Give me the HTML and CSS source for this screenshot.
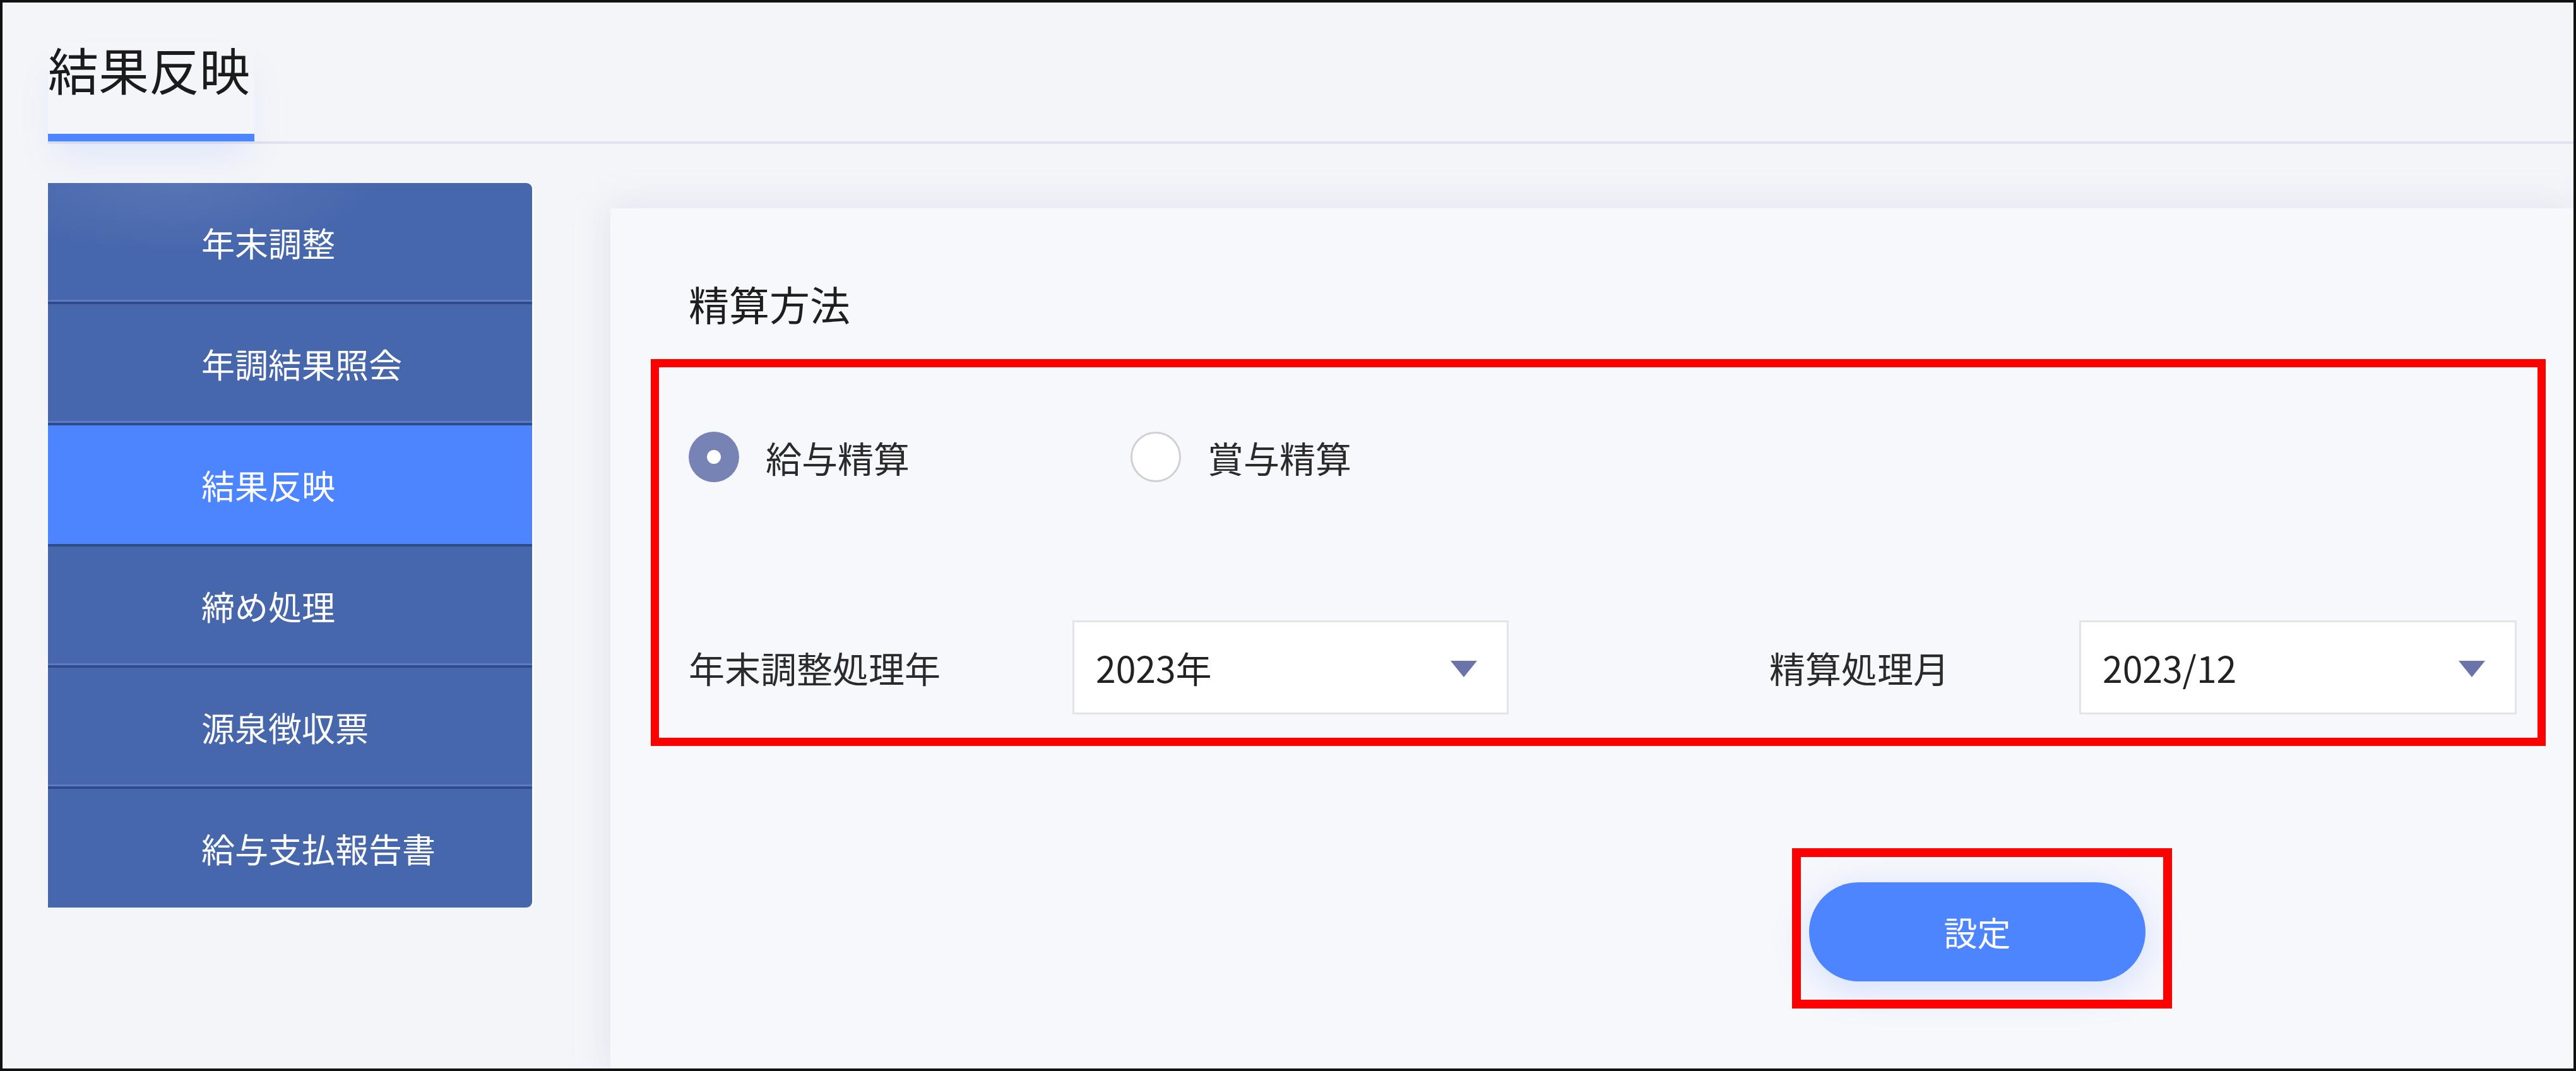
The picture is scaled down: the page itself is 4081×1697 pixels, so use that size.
FILE: index.html
```html
<!DOCTYPE html>
<html lang="ja">
<head>
<meta charset="utf-8">
<title>結果反映</title>
<link rel="stylesheet" href="styles.css">
</head>
<body>
<div class="frame">
  <header class="page-header">
    <div class="tab"><h1 class="tab-title">結果反映</h1></div>
  </header>
  <div class="content">
    <nav class="sidebar">
      <div class="nav-item nav-first">年末調整</div>
      <div class="nav-item">年調結果照会</div>
      <div class="nav-item nav-active">結果反映</div>
      <div class="nav-item">締め処理</div>
      <div class="nav-item">源泉徴収票</div>
      <div class="nav-item nav-last">給与支払報告書</div>
    </nav>
    <main class="panel">
      <h2 class="section-title">精算方法</h2>
      <div class="radio-row">
        <label class="radio-option">
          <span class="radio radio-checked"></span>
          <span class="radio-label">給与精算</span>
        </label>
        <label class="radio-option">
          <span class="radio"></span>
          <span class="radio-label">賞与精算</span>
        </label>
      </div>
      <div class="form-row">
        <span class="field-label field-label-year">年末調整処理年</span>
        <div class="select select-year">
          <span class="select-value">2023年</span>
          <svg class="caret" width="42" height="26" viewBox="0 0 42 26"><path d="M0 0 H42 L21 26 Z" fill="#6b74a8"/></svg>
        </div>
        <span class="field-label field-label-month">精算処理月</span>
        <div class="select select-month">
          <span class="select-value">2023/12</span>
          <svg class="caret" width="42" height="26" viewBox="0 0 42 26"><path d="M0 0 H42 L21 26 Z" fill="#6b74a8"/></svg>
        </div>
      </div>
      <button class="btn-primary" type="button">設定</button>
    </main>
  </div>
  <div class="annot annot-form"></div>
  <div class="annot annot-button"></div>
</div>
</body>
</html>
```

FILE: styles.css
```css
* { box-sizing: border-box; }

html, body {
  margin: 0;
  padding: 0;
}

body {
  font-family: "Noto Sans CJK JP", "Noto Sans", sans-serif;
  background: #f4f5f9;
}

.frame {
  position: relative;
  width: 4081px;
  height: 1697px;
  border: 4px solid #111;
  background: #f4f5f9;
  overflow: hidden;
  display: flex;
  flex-direction: column;
}

.page-header {
  margin-left: 72px;
  padding-top: 64px;
  border-bottom: 4px solid #dfe2ec;
  display: flex;
}

.tab {
  width: 327px;
  padding-bottom: 64px;
  border-bottom: 12px solid #4d84ff;
  box-shadow: 0 34px 60px -12px rgba(77, 132, 255, 0.12);
}

.tab-title {
  margin: 0;
  font-size: 80px;
  line-height: 80px;
  font-weight: 400;
  color: #1b1b1b;
  white-space: nowrap;
}

.content {
  flex: 1;
  display: flex;
  align-items: flex-start;
  margin-left: 72px;
  padding-top: 62px;
  min-height: 0;
}

.sidebar {
  width: 767px;
  flex: none;
  border-radius: 0 9px 9px 0;
  overflow: hidden;
  box-shadow: 3px 0 0 rgba(255, 255, 255, 0.9);
}

.nav-item {
  height: 192px;
  display: flex;
  align-items: center;
  padding-left: 243px;
  background: #4767ad;
  color: #ffffff;
  font-size: 53px;
  line-height: 1;
  border-top: 4px solid #2f4a86;
  box-shadow: inset 0 -3px 0 #5a7bc8;
  white-space: nowrap;
}

.nav-first {
  border-top: none;
  height: 188px;
  background: radial-gradient(ellipse 320px 110px at 200px 0, rgba(255, 255, 255, 0.09), rgba(255, 255, 255, 0) 100%), #4767ad;
}

.nav-last {
  box-shadow: none;
}

.nav-active {
  background: #4d84ff;
  box-shadow: none;
}

.panel {
  flex: 1;
  align-self: stretch;
  margin-top: 40px;
  margin-left: 124px;
  background: #f7f8fc;
  box-shadow: 0 0 50px rgba(190, 197, 222, 0.4);
  padding: 118px 0 0 124px;
}

.section-title {
  margin: 0;
  font-size: 64px;
  line-height: 64px;
  font-weight: 400;
  color: #1e1e1e;
}

.radio-row {
  margin-top: 172px;
  height: 80px;
  display: flex;
  align-items: center;
}

.radio-option {
  width: 700px;
  display: flex;
  align-items: center;
  gap: 42px;
}

.radio {
  width: 80px;
  height: 80px;
  border-radius: 50%;
  background: #ffffff;
  border: 3px solid #cfd0d6;
  flex: none;
  position: relative;
}

.radio-checked {
  background: #7783b5;
  border: none;
}

.radio-checked::after {
  content: "";
  position: absolute;
  left: 29px;
  top: 29px;
  width: 22px;
  height: 22px;
  border-radius: 50%;
  background: #ffffff;
}

.radio-label,
.field-label {
  font-size: 57px;
  line-height: 1;
  color: #2b2b2b;
  white-space: nowrap;
}

.form-row {
  margin-top: 219px;
  height: 149px;
  display: flex;
  align-items: center;
}

.field-label-year {
  width: 608px;
}

.field-label-month {
  margin-left: 413px;
  width: 491px;
}

.select {
  height: 149px;
  background: #ffffff;
  border: 3px solid #e3e4e9;
  display: flex;
  align-items: center;
  justify-content: space-between;
  padding: 0 47px 0 34px;
}

.select-year { width: 691px; }
.select-month { width: 693px; }

.select-value {
  font-size: 57px;
  line-height: 1;
  color: #222;
}

.caret {
  display: block;
  margin-top: 4px;
}

.btn-primary {
  display: block;
  margin-top: 266px;
  margin-left: 1775px;
  width: 533px;
  height: 157px;
  border: none;
  border-radius: 79px;
  background: #4d84ff;
  color: #ffffff;
  font-family: "Noto Sans CJK JP", "Noto Sans", sans-serif;
  font-size: 53px;
  line-height: 1;
  box-shadow: 0 12px 60px rgba(77, 132, 255, 0.22);
}

.annot {
  position: absolute;
  border: 13px solid #ff0000;
  pointer-events: none;
}

.annot-form {
  left: 1027px;
  top: 565px;
  width: 3002px;
  height: 613px;
}

.annot-button {
  left: 2835px;
  top: 1340px;
  width: 602px;
  height: 254px;
  border-width: 14px;
}
```
